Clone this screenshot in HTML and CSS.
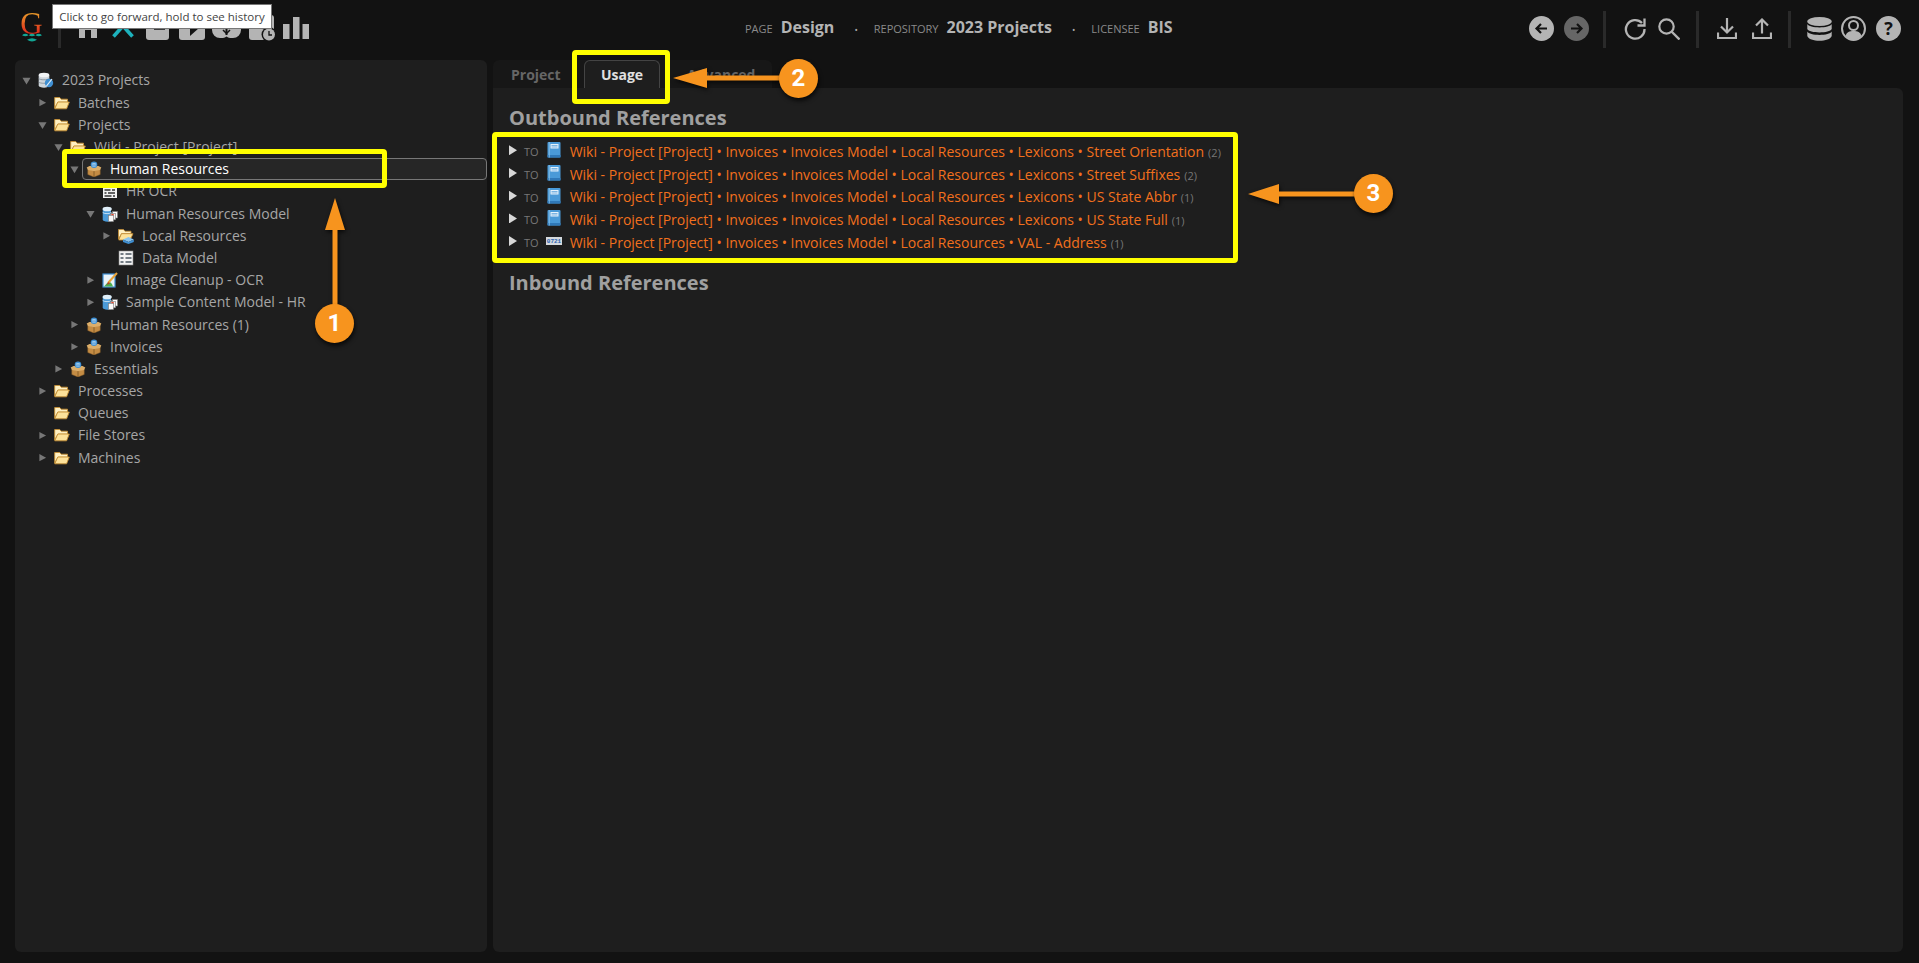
FILE: index.html
```html
<!DOCTYPE html>
<html lang="en">
<head>
<meta charset="utf-8">
<title>Design</title>
<link rel="stylesheet" href="styles.css">
</head>
<body>
<svg class="defs" width="0" height="0" aria-hidden="true">
  <defs>
    <symbol id="i-folder" viewBox="0 0 16 16">
      <path d="M.7 2.500h5l1.500 1.700h6.300v3H4L.7 13z" fill="#fff0c2" stroke="#c58e34" stroke-width=".9"/>
      <path d="M.7 13.800 3.800 7h11.500l-2.700 6.800z" fill="#fde29a" stroke="#c58e34" stroke-width=".9"/>
    </symbol>
    <symbol id="i-pkg" viewBox="0 0 16 16">
      <path d="M1.800 7.500 8 10l6.200-2.500V13.500L8 16l-6.200-2.500z" fill="#c48c44" stroke="#8a5f28" stroke-width=".5"/>
      <path d="M8 10v6" stroke="#7a5322" stroke-width=".8"/>
      <path d="M.7 6.500 3.500 5h9l2.800 1.500L14 9l-6 1.200L2 9z" fill="#dcae6a"/>
      <circle cx="8" cy="3.800" r="3.300" fill="#3f8fd2"/>
      <path d="M5.800 3.800h4.400M6.300 2.500h3.400M6.300 5.200h3.400" stroke="#d8ecfa" stroke-width=".6"/>
    </symbol>
    <symbol id="i-db" viewBox="0 0 16 16">
      <path d="M.7 3v10.500c0 1.400 2.500 2.200 5.300 2.200s5.300-.8 5.300-2.200V3z" fill="#cfd6dc"/>
      <ellipse cx="6" cy="3" rx="5.300" ry="2.300" fill="#f2f4f6"/>
      <path d="M.7 6.500c1.200 1.700 9 1.700 10.600 0M.7 10c1.200 1.700 9 1.700 10.600 0" stroke="#7d8a96" fill="none" stroke-width=".8"/>
      <circle cx="11" cy="11" r="4.200" fill="#3f8fd2"/>
      <path d="m8.500 14 5.500-7" stroke="#e6f2fb" stroke-width="1.200"/>
    </symbol>
    <symbol id="i-model" viewBox="0 0 16 16">
      <path d="M.7 3v10.500c0 1.400 2 2.200 4.800 2.200H9V3z" fill="#4a9ad8"/>
      <ellipse cx="5.200" cy="3" rx="4.600" ry="2.300" fill="#e0eff9"/>
      <path d="M.7 6.500C2 8 8 8 9.500 6.500" stroke="#e0eff9" fill="none" stroke-width=".8"/>
      <rect x="10.500" y="5.500" width="5" height="6.500" fill="#fdfdfd" stroke="#777" stroke-width=".6"/>
      <rect x="8.500" y="7.300" width="5" height="6.500" fill="#f4f4f4" stroke="#777" stroke-width=".6"/>
      <rect x="9.300" y="8" width="2.400" height="2.200" fill="#e2492f"/>
      <rect x="6.500" y="9.300" width="5" height="6.300" fill="#fafafa" stroke="#777" stroke-width=".6"/>
    </symbol>
    <symbol id="i-ocr" viewBox="0 0 16 16">
      <rect x="1" y="1" width="14" height="14" fill="#f2f2f2"/>
      <path d="M2.500 4h3M7 4h6M2.500 7h6M10 7h3M2.500 10h2M6 10h7M2.500 13h7M11 13h2" stroke="#333" stroke-width="1.400"/>
    </symbol>
    <symbol id="i-local" viewBox="0 0 16 16">
      <path d="M.5 1.500h5L7 3.200h6v2.500H3.500L.5 11z" fill="#fff0c2" stroke="#c58e34" stroke-width=".8"/>
      <path d="M.7 12 3.500 5.700H15L13 10l-6 2z" fill="#fde29a" stroke="#c58e34" stroke-width=".8"/>
      <path d="M5 11.500 10.500 9l5.300 2.500-5.300 2.500z" fill="#8cc4ec"/>
      <path d="M5 11.500V14l5.500 2v-2zM15.800 11.500V14l-5.300 2v-2z" fill="#3f8fd2"/>
    </symbol>
    <symbol id="i-table" viewBox="0 0 16 16">
      <rect x="1" y="1" width="14" height="14" fill="#f4f4f4" stroke="#888" stroke-width=".6"/>
      <path d="M2.500 4h3M7.500 4h6M2.500 8h3M7.500 8h6M2.500 12h3M7.500 12h6" stroke="#4a5560" stroke-width="1.600"/>
    </symbol>
    <symbol id="i-clean" viewBox="0 0 16 16">
      <rect x="1" y="2" width="12" height="13" fill="#e9f3fa" stroke="#3f8fd2" stroke-width="1.200"/>
      <path d="M2 14.500 7 9l3 3 1 2.500z" fill="#4caf50"/>
      <path d="M6 11 15 1" stroke="#e8a33a" stroke-width="2"/>
      <path d="M4.500 13 6.500 10l1.500 1.500z" fill="#c0392b"/>
    </symbol>
    <symbol id="i-book" viewBox="0 0 16 16">
      <rect x="1.500" y="0" width="13" height="15.500" rx="1" fill="#4a9ad8"/>
      <rect x="1.500" y="13" width="13" height="2.500" fill="#2f78b8"/>
      <rect x="4.500" y="2" width="8" height="4.500" fill="#e6f2fb"/>
      <path d="M5.500 3.500h6M5.500 5h6" stroke="#4a9ad8" stroke-width=".7"/>
      <path d="M3.300 0v15.500" stroke="#8bc1e9" stroke-width=".8"/>
    </symbol>
    <symbol id="i-val" viewBox="0 0 16 16">
      <rect x="0" y="4" width="16" height="8" fill="#d5d9dd"/>
      <text x="8" y="10.300" text-anchor="middle" class="val-text">0721</text>
    </symbol>
    <symbol id="i-down" viewBox="0 0 20 21">
      <path d="M10 0v14M4 8.500l6 6 6-6M1 14.500V20h18v-5.500" fill="none" stroke="#b4b4b4" stroke-width="2.200"/>
    </symbol>
    <symbol id="i-up" viewBox="0 0 20 21">
      <path d="M10 15.500V1.500M4 7.500l6-6 6 6M1 14.500V20h18v-5.500" fill="none" stroke="#b4b4b4" stroke-width="2.200"/>
    </symbol>
  </defs>
</svg>

<header class="topbar">
  <div class="top-left">
    <div class="logo">
      <span class="logo-g">G</span>
      <svg class="logo-waves" viewBox="0 0 20 9" width="20" height="9"><path d="M0 2.200Q3.500-.5 6.500 2.200 3.500 4.500 0 2.200zM6.700 2.200Q10-.5 13.300 2.200 10 4.500 6.700 2.200zM13.500 2.200Q16.500-.5 20 2.200 16.500 4.500 13.500 2.200zM5 6.800Q10 3.500 15 6.800 10 10 5 6.800z" fill="#12a594"/></svg>
    </div>
    <span class="vsep"></span>
    <nav class="main-icons">
      <svg class="n-home" width="18" height="24" viewBox="0 0 18 24"><path d="M9 0 0 9v15h6v-8h6v8h6V9z" fill="#b4b4b4"/></svg>
      <svg class="n-tools" width="22" height="26" viewBox="0 0 22 26"><path d="M1.500 24.500 20 4M20.500 24.500 2 4" stroke="#1db2bd" stroke-width="3.600"/></svg>
      <svg class="n-box" width="23" height="24" viewBox="0 0 23 24"><rect width="23" height="24" rx="3" fill="#b4b4b4"/><rect x="8" y="12" width="11" height="2" fill="#3a3a3a"/></svg>
      <svg class="n-play" width="26" height="24" viewBox="0 0 26 24"><rect width="26" height="24" rx="3" fill="#b4b4b4"/><path d="M11 4v16l9-8z" fill="#121212"/></svg>
      <svg class="n-cloud" width="29" height="22" viewBox="0 0 29 22"><path d="M0 8a6 6 0 0 1 6-6h4a5 5 0 0 1 4.500 2A5 5 0 0 1 19 2h4a6 6 0 0 1 6 6v6a8 8 0 0 1-8 8h-3a6 6 0 0 1-3.500-1.500A6 6 0 0 1 11 22H8a8 8 0 0 1-8-8z" fill="#b4b4b4"/><path d="M14.500 8v11" stroke="#121212" stroke-width="2"/><path d="m11 14 3.500 3.500L18 14" stroke="#121212" stroke-width="1.500" fill="none"/></svg>
      <svg class="n-clock" width="27" height="27" viewBox="0 0 27 27"><rect x="0" y="0" width="25" height="25" rx="3" fill="#b4b4b4"/><circle cx="20" cy="19.500" r="7.500" fill="#121212"/><circle cx="20" cy="19.500" r="6" fill="#b4b4b4"/><path d="M20 16v4h3" stroke="#121212" stroke-width="1.300" fill="none"/></svg>
      <svg class="n-bars" width="26" height="22" viewBox="0 0 26 22"><path d="M0 7h6.500v15H0zM10 0h6.500v22H10zM19.500 7H26v15h-6.500z" fill="#b4b4b4"/></svg>
    </nav>
  </div>
  <div class="top-info">
    <span class="lbl">PAGE</span><b class="val">Design</b><span class="dot">•</span>
    <span class="lbl">REPOSITORY</span><b class="val">2023 Projects</b><span class="dot">•</span>
    <span class="lbl">LICENSEE</span><b class="val">BIS</b>
  </div>
  <div class="top-right">
    <svg class="t-back" width="25" height="25" viewBox="0 0 25 25"><circle cx="12.500" cy="12.500" r="12.500" fill="#b4b4b4"/><path d="M18 12.500H8M12 8l-4.500 4.500L12 17" stroke="#121212" stroke-width="2.200" fill="none"/></svg>
    <svg width="25" height="25" viewBox="0 0 25 25"><circle cx="12.500" cy="12.500" r="12.500" fill="#666"/><path d="M7 12.500h10M13 8l4.500 4.500L13 17" stroke="#121212" stroke-width="2.200" fill="none"/></svg>
    <span class="bar bar-a"></span>
    <svg class="t-reload" width="22" height="22" viewBox="0 0 22 22"><path d="M18 5A9.300 9.300 0 1 0 20.500 11" fill="none" stroke="#b4b4b4" stroke-width="2.300"/><path d="M20.500 .5v7H13.500" fill="none" stroke="#b4b4b4" stroke-width="2.300"/></svg>
    <svg width="22" height="22" viewBox="0 0 22 22"><circle cx="8.500" cy="8.500" r="7.200" fill="none" stroke="#b4b4b4" stroke-width="2.200"/><path d="m13.500 13.500 8 8" stroke="#b4b4b4" stroke-width="2.400"/></svg>
    <span class="bar"></span>
    <svg class="t-down" width="20" height="21"><use href="#i-down"/></svg>
    <svg width="20" height="21"><use href="#i-up"/></svg>
    <span class="bar bar-c"></span>
    <svg class="t-db" width="25" height="24" viewBox="0 0 25 24"><ellipse cx="12.500" cy="4.500" rx="12.200" ry="4.500" fill="#b4b4b4"/><path d="M.3 7C2 11.500 23 11.500 24.700 7v5C23 16.500 2 16.500 .3 12zM.3 14.500C2 19 23 19 24.700 14.500V19C23 25.300 2 25.300 .3 19z" fill="#b4b4b4"/></svg>
    <svg class="t-user" width="25" height="25" viewBox="0 0 25 25"><circle cx="12.500" cy="12.500" r="11.500" fill="none" stroke="#b4b4b4" stroke-width="2"/><circle cx="12.500" cy="9.500" r="4.500" fill="none" stroke="#b4b4b4" stroke-width="2"/><path d="M4.500 20c1-4 4-5 8-5s7 1 8 5c-2 2.500-5 3.500-8 3.500S6.500 22.500 4.500 20z" fill="#b4b4b4"/></svg>
    <span class="help">?</span>
  </div>
</header>

<main class="workspace">
  <aside class="tree-panel">
    <ul class="tree root">
      <li><div class="row"><i class="tw open"></i><svg class="ic"><use href="#i-db"/></svg><span>2023 Projects</span></div>
        <ul class="tree">
          <li><div class="row"><i class="tw"></i><svg class="ic"><use href="#i-folder"/></svg><span>Batches</span></div></li>
          <li><div class="row"><i class="tw open"></i><svg class="ic"><use href="#i-folder"/></svg><span>Projects</span></div>
            <ul class="tree">
              <li><div class="row"><i class="tw open"></i><svg class="ic"><use href="#i-folder"/></svg><span>Wiki - Project [Project]</span></div>
                <ul class="tree">
                  <li><div class="row selected"><i class="tw open"></i><svg class="ic"><use href="#i-pkg"/></svg><span>Human Resources</span></div>
                    <ul class="tree">
                      <li><div class="row"><i class="tw none"></i><svg class="ic"><use href="#i-ocr"/></svg><span>HR OCR</span></div></li>
                      <li><div class="row"><i class="tw open"></i><svg class="ic"><use href="#i-model"/></svg><span>Human Resources Model</span></div>
                        <ul class="tree">
                          <li><div class="row"><i class="tw"></i><svg class="ic"><use href="#i-local"/></svg><span>Local Resources</span></div></li>
                          <li><div class="row"><i class="tw none"></i><svg class="ic"><use href="#i-table"/></svg><span>Data Model</span></div></li>
                        </ul>
                      </li>
                      <li><div class="row"><i class="tw"></i><svg class="ic"><use href="#i-clean"/></svg><span>Image Cleanup - OCR</span></div></li>
                      <li><div class="row"><i class="tw"></i><svg class="ic"><use href="#i-model"/></svg><span>Sample Content Model - HR</span></div></li>
                    </ul>
                  </li>
                  <li><div class="row"><i class="tw"></i><svg class="ic"><use href="#i-pkg"/></svg><span>Human Resources (1)</span></div></li>
                  <li><div class="row"><i class="tw"></i><svg class="ic"><use href="#i-pkg"/></svg><span>Invoices</span></div></li>
                </ul>
              </li>
              <li><div class="row"><i class="tw"></i><svg class="ic"><use href="#i-pkg"/></svg><span>Essentials</span></div></li>
            </ul>
          </li>
          <li><div class="row"><i class="tw"></i><svg class="ic"><use href="#i-folder"/></svg><span>Processes</span></div></li>
          <li><div class="row"><i class="tw none"></i><svg class="ic"><use href="#i-folder"/></svg><span>Queues</span></div></li>
          <li><div class="row"><i class="tw"></i><svg class="ic"><use href="#i-folder"/></svg><span>File Stores</span></div></li>
          <li><div class="row"><i class="tw"></i><svg class="ic"><use href="#i-folder"/></svg><span>Machines</span></div></li>
        </ul>
      </li>
    </ul>
  </aside>

  <section class="content-panel">
    <div class="tabs">
      <span class="tab tab-project">Project</span>
      <span class="tab active">Usage</span>
      <span class="tab tab-advanced">Advanced</span>
    </div>
    <div class="tab-body">
      <h2>Outbound References</h2>
      <ul class="refs">
        <li><i class="ref-tw"></i><span class="to">TO</span><svg class="ic ic-ref"><use href="#i-book"/></svg><a>Wiki - Project [Project] • Invoices • Invoices Model • Local Resources • Lexicons • Street Orientation</a><span class="count">(2)</span></li>
        <li><i class="ref-tw"></i><span class="to">TO</span><svg class="ic ic-ref"><use href="#i-book"/></svg><a>Wiki - Project [Project] • Invoices • Invoices Model • Local Resources • Lexicons • Street Suffixes</a><span class="count">(2)</span></li>
        <li><i class="ref-tw"></i><span class="to">TO</span><svg class="ic ic-ref"><use href="#i-book"/></svg><a>Wiki - Project [Project] • Invoices • Invoices Model • Local Resources • Lexicons • US State Abbr</a><span class="count">(1)</span></li>
        <li><i class="ref-tw"></i><span class="to">TO</span><svg class="ic ic-ref"><use href="#i-book"/></svg><a>Wiki - Project [Project] • Invoices • Invoices Model • Local Resources • Lexicons • US State Full</a><span class="count">(1)</span></li>
        <li><i class="ref-tw"></i><span class="to">TO</span><svg class="ic ic-ref"><use href="#i-val"/></svg><a>Wiki - Project [Project] • Invoices • Invoices Model • Local Resources • VAL - Address</a><span class="count">(1)</span></li>
      </ul>
      <h2 class="inbound">Inbound References</h2>
    </div>
  </section>
</main>

<div class="tooltip">Click to go forward, hold to see history</div>

<div class="mark mark-1"></div>
<div class="mark mark-2"></div>
<div class="mark mark-3"></div>

<svg class="arrow arrow-1" width="24" height="110" viewBox="0 0 24 110"><path d="M12 0 22 32h-7.500v78h-5V32H2z"/></svg>
<svg class="arrow arrow-2" width="110" height="24" viewBox="0 0 110 24"><path d="M0 12 34 2v7.500h76v5H34V22z"/></svg>
<svg class="arrow arrow-3" width="110" height="24" viewBox="0 0 110 24"><path d="M0 12 31 2v7.500h79v5H31V22z"/></svg>
<span class="badge badge-1">1</span>
<span class="badge badge-2">2</span>
<span class="badge badge-3">3</span>
</body>
</html>
```

FILE: styles.css
```css
* { box-sizing: border-box; }
html, body { height: 100%; }
body {
  margin: 0;
  background: #121212;
  font-family: "Open Sans", sans-serif;
  color: #aaa;
  overflow: hidden;
  position: relative;
}
.defs { position: absolute; }
.val-text { font: 700 6px "Liberation Mono", monospace; fill: #2a62b0; }

.topbar {
  height: 60px;
  display: flex;
  align-items: flex-start;
}
.top-left { display: flex; flex: 0 0 745px; padding-left: 21px; }
.logo { width: 21px; margin-top: 12px; display: flex; flex-direction: column; align-items: center; }
.logo-g {
  font: 400 31px/24px "Liberation Serif", serif;
  background: linear-gradient(#e8a02a, #e2401f 70%, #d1231a);
  -webkit-background-clip: text;
  background-clip: text;
  color: transparent;
}
.logo-waves { margin-top: -3px; }
.vsep { width: 3px; height: 20px; background: #2a2a2a; margin: 28px 0 0 16px; }
.main-icons { display: flex; align-items: flex-end; height: 28px; margin: 12px 0 0 18px; }
.n-home { margin: 0 15px 2px 0; }
.n-tools { margin: 0 12px 2px 0; }
.n-box { margin-right: 10px; }
.n-play { margin-right: 7px; }
.n-cloud { margin: 0 8px 2px 0; }
.n-clock { margin: 0 7px -2px 0; }
.n-bars { margin-bottom: 1px; }

.top-info {
  display: flex;
  align-items: baseline;
  padding-top: 16px;
}
.lbl { font-size: 11px; color: #8a8a8a; margin-right: 8px; }
.val { font-size: 16px; font-weight: 700; color: #b4b4b4; }
.dot { font-size: 9px; color: #aaa; margin: 0 16px 0 20px; }

.top-right { display: flex; align-items: center; height: 57px; margin-left: auto; padding-right: 18px; }
.t-back { margin-right: 10px; }
.t-reload { margin-right: 12px; }
.t-down { margin-right: 15px; }
.t-db { margin-right: 9px; }
.t-user { margin-right: 10px; }
.bar { width: 3px; height: 37px; background: #2a2a2a; margin: 2px 18px 0 16px; }
.bar-a { margin-left: 14px; }
.bar-c { margin: 2px 16px 0 16px; }
.help {
  width: 25px; height: 25px; border-radius: 50%;
  background: #b4b4b4; color: #121212;
  font: 700 18px/25px "Open Sans", sans-serif;
  text-align: center;
}

.workspace {
  height: 892px;
  display: flex;
  gap: 6px;
  padding: 0 16px 0 15px;
}
.tree-panel {
  flex: 0 0 472px;
  background: #1e1e1e;
  border-radius: 6px;
  padding: 9.400px 0 0 0;
}
.tree { list-style: none; margin: 0; padding: 0 0 0 16px; font-size: 14px; }
.tree.root { padding-left: 4px; }
.row {
  height: 22.200px;
  display: flex;
  align-items: center;
  line-height: 20px;
  color: #a6a6a6;
  white-space: nowrap;
}
.row.selected { color: #fff; position: relative; }
.row.selected::before {
  content: "";
  position: absolute;
  left: 15px; right: 0; top: 0; bottom: 0;
  border: 1px solid #777;
  border-radius: 4px;
  background: #262626;
}
.row.selected > * { position: relative; }
.tw {
  margin: 0 7px 0 3px;
  width: 9px; height: 9px;
  background: #777;
  clip-path: polygon(15% 10%, 90% 50%, 15% 90%);
}
.tw.open { clip-path: polygon(5% 20%, 95% 20%, 50% 95%); }
.tw.none { background: none; }
.ic { width: 16px; height: 16px; flex: none; margin-right: 8px; }

.content-panel { flex: 1; display: flex; flex-direction: column; }
.tabs {
  height: 28px;
  width: 279px;
  display: flex;
  background: #171717;
  border-radius: 6px 6px 0 0;
  font-size: 14px;
  font-weight: 700;
  color: #666;
}
.tab { padding-top: 5px; height: 28px; }
.tab-project { width: 91px; padding-left: 18px; }
.tab-advanced { padding-left: 27px; }
.tab.active {
  width: 76px;
  color: #e0e0e0;
  text-align: center;
  background: #1e1e1e;
  border: 1px solid #444;
  border-bottom: 0;
  border-radius: 6px 6px 0 0;
  padding-top: 4px;
}
.tab-body {
  flex: 1;
  background: #1e1e1e;
  border-radius: 0 6px 6px 6px;
  padding: 18px 16px;
}
h2 { margin: 0; font-size: 20px; line-height: 24px; font-weight: 700; color: #a0a0a0; }
.inbound { margin-top: 18px; }
.refs { list-style: none; margin: 10px 0 0; padding: 0; font-size: 14px; }
.refs li { height: 22.700px; display: flex; align-items: center; white-space: nowrap; }
.ref-tw {
  width: 8px; height: 10px; margin-right: 7px; margin-top: -2px;
  background: #d8d8d8;
  clip-path: polygon(0 0, 100% 50%, 0 100%);
}
.to { font-size: 11px; color: #777; margin-right: 7px; margin-top: 1px; }
.ic-ref { margin-right: 8px; margin-top: -2px; }
.refs a { color: #f2701d; }
.count { font-size: 11px; color: #777; margin-left: 4px; margin-top: 2px; }

.tooltip {
  position: absolute;
  left: 52px; top: 4px;
  width: 220px; height: 25px;
  background: #fff;
  border: 1px solid #777;
  color: #444;
  font-size: 11.500px;
  line-height: 23px;
  text-align: center;
  white-space: nowrap;
}
.mark { position: absolute; border: 5px solid #ff0; border-radius: 4px; }
.mark-1 { left: 62px; top: 149px; width: 325px; height: 39px; }
.mark-2 { left: 572px; top: 50px; width: 98px; height: 54px; }
.mark-3 { left: 492px; top: 132px; width: 746px; height: 131px; }

.arrow { position: absolute; fill: #f7941e; filter: drop-shadow(1px 2px 2px rgba(0,0,0,.7)); }
.arrow-1 { left: 323px; top: 198px; }
.arrow-2 { left: 673px; top: 66px; }
.arrow-3 { left: 1248px; top: 182px; }
.badge {
  position: absolute;
  width: 39px; height: 39px;
  border-radius: 50%;
  background: #f7941e;
  color: #fff;
  font: 700 24px/39px Roboto, sans-serif;
  text-align: center;
  box-shadow: 1px 3px 4px rgba(0,0,0,.7);
}
.badge-1 { left: 315px; top: 304px; }
.badge-2 { left: 779px; top: 59px; }
.badge-3 { left: 1354px; top: 174px; }
```
